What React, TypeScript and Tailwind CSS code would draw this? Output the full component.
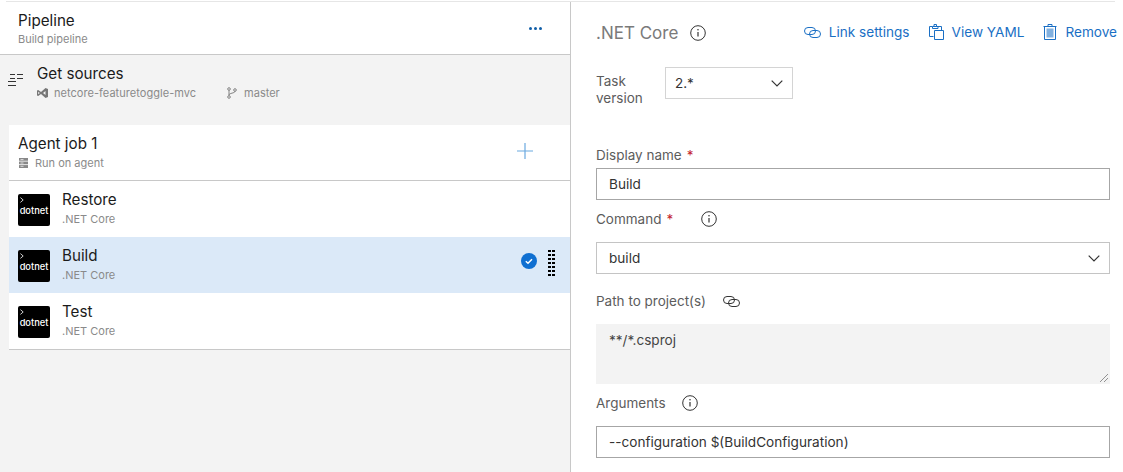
const FONT = "font-['Inter','Noto_Sans',sans-serif]";

const TASKS = [
  { name: "Restore", selected: false },
  { name: "Build", selected: true },
  { name: "Test", selected: false },
];

function LinkIcon({ className = "" }: { className?: string }) {
  return (
    <svg viewBox="0 0 17 11" width="17" height="11" fill="none" stroke="currentColor" strokeWidth="1" className={`shrink-0 ${className}`}>
      <rect x="0.500" y="0.500" width="11" height="7" rx="3.500" />
      <rect x="5.500" y="3.500" width="11" height="7" rx="3.500" />
    </svg>
  );
}

function InfoIcon() {
  return (
    <svg viewBox="0 0 16 16" width="16" height="16" fill="none" stroke="#333" strokeWidth="1" className="shrink-0">
      <circle cx="8" cy="8" r="7.300" />
      <path d="M8 7v4.500" strokeWidth="1.200" />
      <circle cx="8" cy="4.700" r="0.800" fill="#333" stroke="none" />
    </svg>
  );
}

function Chevron() {
  return (
    <svg viewBox="0 0 12 7" width="12" height="7" fill="none" stroke="#333" strokeWidth="1.200" className="shrink-0">
      <path d="M0.700 0.700 6 6l5.300-5.300" />
    </svg>
  );
}

function DotnetIcon() {
  return (
    <div className="relative mt-[4px] h-8 w-8 shrink-0 rounded-[2px] bg-black text-white">
      <svg viewBox="0 0 5 7" width="4" height="6" fill="none" stroke="white" strokeWidth="1" className="absolute left-[2px] top-[3px]">
        <path d="M0.500 0.500 4 3.500.500 6.500" />
      </svg>
      <span className="absolute left-0 right-0 top-[11px] text-center text-[9.300px] font-medium leading-[12px]">dotnet</span>
    </div>
  );
}

function DragHandle() {
  return (
    <div className="mt-[4px] grid w-[7px] grid-cols-2 gap-x-[1.500px] gap-y-[2px]">
      {Array.from({ length: 14 }).map((_, i) => (
        <span key={i} className="h-[2px] w-[2.500px] bg-black" />
      ))}
    </div>
  );
}

function TaskRow({ name, selected }: { name: string; selected: boolean }) {
  return (
    <div className={`flex h-[56px] items-start pl-[9px] pt-[9px] ${selected ? "bg-[#dbe9f8]" : "bg-white"}`}>
      <DotnetIcon />
      <div className="ml-[12px] flex-1">
        <div className="text-[15.200px] leading-[20px] text-[#1b1b1b]">{name}</div>
        <div className="mt-[1px] text-[11px] leading-[16px] text-[#8a8a8a]">.NET Core</div>
      </div>
      {selected && (
        <div className="mr-[15px] flex items-start gap-[11px]">
          <svg viewBox="0 0 16 16" width="16" height="16" className="mt-[7px]">
            <circle cx="8" cy="8" r="8" fill="#0f6fd1" />
            <path d="M4.800 8.200 7 10.200l4-4" fill="none" stroke="white" strokeWidth="1.500" />
          </svg>
          <DragHandle />
        </div>
      )}
    </div>
  );
}

function LeftPanel() {
  return (
    <div className="flex w-[571px] shrink-0 flex-col border-r border-[#c8c8c8] bg-[#f3f3f3]">
      <div className="flex h-[53px] shrink-0 items-start justify-between border-b border-[#c8c8c8] bg-white pl-[18px] pr-[28px] pt-[8px]">
        <div>
          <div className="mt-[1px] text-[15.200px] leading-[20px] text-[#1b1b1b]">Pipeline</div>
          <div className="text-[11px] leading-[16px] text-[#8a8a8a]">Build pipeline</div>
        </div>
        <div className="mt-[17px] flex gap-[2px]">
          <span className="h-[3px] w-[3px] rounded-full bg-[#105ea8]" />
          <span className="h-[3px] w-[3px] rounded-full bg-[#105ea8]" />
          <span className="h-[3px] w-[3px] rounded-full bg-[#105ea8]" />
        </div>
      </div>

      <div className="flex h-[70px] shrink-0 items-start pl-[8px] pt-[9px]">
        <svg viewBox="0 0 15 12" width="15" height="12" stroke="#333" strokeWidth="1" className="mt-[10px] shrink-0">
          <path d="M2 0.500h5M9 0.500h6M2 4.500h5M9 4.500h6M0 7.500h8M0 11.500h8" />
        </svg>
        <div className="ml-[14px]">
          <div className="text-[15.200px] leading-[20px] text-[#1b1b1b]">Get sources</div>
          <div className="mt-[1px] flex items-center text-[11px] leading-[16px] text-[#8a8a8a]">
            <svg viewBox="0 0 11 10" width="11" height="10" fill="#777" className="shrink-0">
              <path d="M0 2.500 1.200 2 4 4 8.500 0 11 1v8L8.500 10 4 6 1.200 8 0 7.500zM1.200 3.700v2.600L2.800 5zM8.500 3 6 5l2.500 2z" />
            </svg>
            <span className="ml-[6px] tracking-[0.04px]">netcore-featuretoggle-mvc</span>
            <svg viewBox="0 0 10 12" width="10" height="12" fill="none" stroke="#777" strokeWidth="0.900" className="ml-[31px] shrink-0">
              <circle cx="2" cy="2" r="1.300" />
              <circle cx="2" cy="10" r="1.300" />
              <circle cx="8" cy="3" r="1.300" />
              <path d="M2 3.300v5.400M8 4.300c0 2-6 1.700-6 3.700" />
            </svg>
            <span className="ml-[7px]">master</span>
          </div>
        </div>
      </div>

      <div className="ml-[9px] flex flex-col border-b border-[#c8c8c8]">
        <div className="flex h-[56px] items-start justify-between border-b border-[#c8c8c8] bg-white pl-[9px] pr-[37px] pt-[9px]">
          <div>
            <div className="text-[15.200px] leading-[20px] text-[#1b1b1b]">Agent job 1</div>
            <div className="mt-[1px] flex items-center text-[11px] leading-[16px] text-[#8a8a8a]">
              <svg viewBox="0 0 9 10" width="9" height="10" className="ml-[1px] shrink-0">
                <rect width="9" height="10" fill="#888" />
                <path d="M0 3.200h9M0 6.600h9" stroke="white" strokeWidth="0.800" />
                <path d="M1.500 1.600h3M1.500 5h3M1.500 8.300h3" stroke="white" strokeWidth="0.700" />
              </svg>
              <span className="ml-[7px]">Run on agent</span>
            </div>
          </div>
          <svg viewBox="0 0 16 16" width="16" height="16" stroke="#6ba9e0" strokeWidth="1.200" className="mt-[9px]">
            <path d="M8 0v16M0 8h16" />
          </svg>
        </div>
        {TASKS.map((t) => (
          <TaskRow key={t.name} name={t.name} selected={t.selected} />
        ))}
      </div>
    </div>
  );
}

function Label({ children, short = false }: { children: React.ReactNode; short?: boolean }) {
  return (
    <div className={`flex items-start text-[13.500px] leading-[18px] text-[#5c5c5c] ${short ? "h-[22px]" : "h-[32px]"}`}>
      {children}
    </div>
  );
}

function Required() {
  return <span className="ml-[5px] text-[#c4262e]">*</span>;
}

function Action({ icon, label, className = "" }: { icon: React.ReactNode; label: string; className?: string }) {
  return (
    <div className={`flex items-center text-[13.600px] text-[#1a6fc4] ${className}`}>
      {icon}
      <span className="ml-[8px]">{label}</span>
    </div>
  );
}

function RightPanel() {
  return (
    <div className="flex-1 bg-white pl-[25px] pr-[13px]">
      <div className="flex h-[50px] items-center pt-[11px]">
        <span className="mt-[1px] text-[17px] leading-[24px] text-[#7a7a7a]">.NET Core</span>
        <span className="ml-[12px] mt-[1px]"><InfoIcon /></span>
        <div className="ml-auto mr-[-7px] flex">
          <Action icon={<LinkIcon />} label="Link settings" />
          <Action
            className="ml-[19px]"
            label="View YAML"
            icon={
              <svg viewBox="0 0 15 16" width="15" height="16" fill="none" stroke="currentColor" strokeWidth="1">
                <path d="M4.500 12.500h-4v-10h3M9 2.500h3.500v3.500M3.500 2.500h5.500V4.500H3.500zM5 2.500V0.500h2.500v2" />
                <path d="M5.500 6.500h9v9h-9z" />
              </svg>
            }
          />
          <Action
            className="ml-[19px]"
            label="Remove"
            icon={
              <svg viewBox="0 0 14 16" width="14" height="16" fill="none" stroke="currentColor" strokeWidth="1">
                <path d="M0.500 2.500h13M5 2.500V0.500h4v2" />
                <path d="M1.500 2.500h11v13h-11z" />
                <path d="M3.500 4.500h7v9h-7z" fill="currentColor" fillOpacity="0.55" stroke="none" />
              </svg>
            }
          />
        </div>
      </div>

      <div className="mt-[15px] flex items-start">
        <div className="w-[69px] pt-[6px] text-[13.500px] leading-[17px] text-[#5c5c5c]">
          Task<br />version
        </div>
        <div className="flex h-[32px] w-[128px] items-center justify-between border border-[#d4d4d4] pl-[9px] pr-[9px] text-[13.500px] text-[#333]">
          2.*
          <Chevron />
        </div>
      </div>

      <div className="mt-[39px]">
        <Label short>Display name<Required /></Label>
      </div>
      <div className="flex h-[32px] items-center border border-[#a6a6a6] px-[12px] text-[13.600px] text-[#333]">Build</div>

      <div className="mt-[10px]">
        <Label>
          Command<Required />
          <span className="ml-[28px] mt-[1px]"><InfoIcon /></span>
        </Label>
      </div>
      <div className="flex h-[32px] items-center justify-between border border-[#c4c4c4] pl-[12px] pr-[9px] text-[13.600px] text-[#333]">
        build
        <Chevron />
      </div>

      <div className="mt-[18px]">
        <Label>
          Path to project(s)
          <LinkIcon className="ml-[17px] mt-[4px] text-[#333]" />
        </Label>
      </div>
      <div className="relative h-[60px] bg-[#f3f3f3] px-[13px] pt-[7px] text-[13.600px] leading-[18px] text-[#444]">
        **/*.csproj
        <svg viewBox="0 0 8 8" width="8" height="8" stroke="#777" strokeWidth="0.800" className="absolute bottom-[2px] right-[2px]">
          <path d="M0 8l8-8M4 8l4-4" />
        </svg>
      </div>

      <div className="mt-[10px]">
        <Label>
          Arguments
          <span className="ml-[16px] mt-[1px]"><InfoIcon /></span>
        </Label>
      </div>
      <div className="flex h-[32px] items-center border border-[#a6a6a6] px-[12px] text-[13.600px] text-[#333]">
        --configuration $(BuildConfiguration)
      </div>
    </div>
  );
}

export default function App() {
  return (
    <div className={`flex h-[472px] w-[1123px] flex-col overflow-hidden bg-white ${FONT}`}>
      <div className="h-[2px] shrink-0 pl-[6px] pr-[8px] pt-[1px]">
        <div className="h-[1px] bg-[#e6e6e6]" />
      </div>
      <div className="flex min-h-0 flex-1">
        <LeftPanel />
        <RightPanel />
      </div>
    </div>
  );
}
